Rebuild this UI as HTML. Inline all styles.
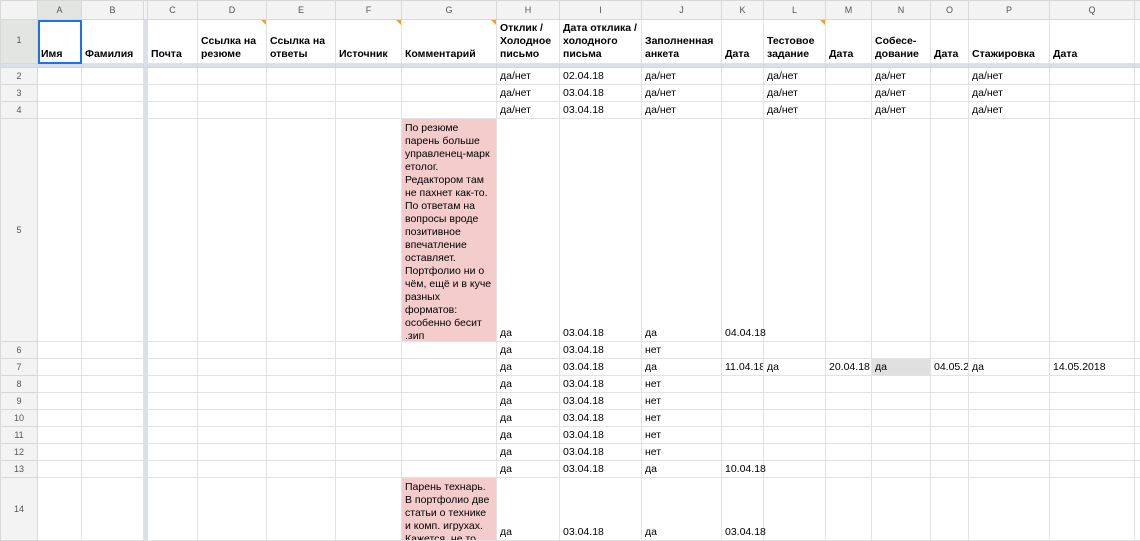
<!DOCTYPE html>
<html><head><meta charset="utf-8"><style>
*{box-sizing:border-box}
body{margin:0;width:1140px;height:539px;overflow:hidden;background:#fff;font-family:"Liberation Sans",Arial,sans-serif}
table{border-collapse:collapse;table-layout:fixed;width:1140px}
td{border:1px solid #e2e2e2;padding:0 3px 1px 3px;font-size:10.5px;color:#000;white-space:nowrap;overflow:hidden;vertical-align:bottom;line-height:13px;position:relative}
tr.ch td{background:#f3f3f3;color:#555;font-size:9px;text-align:center;vertical-align:middle;border-color:#d8d8d8;padding:0}
td.rh{background:#f3f3f3;color:#555;font-size:9px;text-align:center;vertical-align:middle;border-color:#d8d8d8;padding:0}
td.fz{background:#dcdfe6;border-color:#dcdfe6;padding:0}
tr.sep td{background:#dcdfe6;border-color:#d4d7de;padding:0;height:4px}
tr.h1 td{font-weight:bold;padding-bottom:2px}
td.pk{background:#f4cccc;vertical-align:top;padding:0}
td.pk div{padding:3px 3px 0 3px;overflow:hidden}
.tri{position:absolute;top:0;right:0;width:0;height:0;border-top:5px solid #f0a030;border-left:5px solid transparent}
.sel{outline:2px solid #1a73e8;outline-offset:-2px}
.gr{background:#e0e0e0}
</style></head><body>
<table>
<colgroup><col style="width:37px"><col style="width:44px"><col style="width:62px"><col style="width:4px"><col style="width:50px"><col style="width:69px"><col style="width:69px"><col style="width:66px"><col style="width:95px"><col style="width:63px"><col style="width:82px"><col style="width:80px"><col style="width:42px"><col style="width:62px"><col style="width:46px"><col style="width:59px"><col style="width:38px"><col style="width:81px"><col style="width:85px"><col style="width:6px"></colgroup>
<tr class="ch" style="height:19px"><td></td><td style="background:#e3e5e3">A</td><td>B</td><td class="fz"></td><td>C</td><td>D</td><td>E</td><td>F</td><td>G</td><td>H</td><td>I</td><td>J</td><td>K</td><td>L</td><td>M</td><td>N</td><td>O</td><td>P</td><td>Q</td><td></td></tr>
<tr class="h1" style="height:44px"><td class="rh" style="background:#e3e5e3;font-weight:normal">1</td><td class="sel">Имя</td><td>Фамилия</td><td class="fz"></td><td>Почта</td><td>Ссылка на<br>резюме<span class="tri"></span></td><td>Ссылка на<br>ответы</td><td>Источник<span class="tri"></span></td><td>Комментарий<span class="tri"></span></td><td>Отклик /<br>Холодное<br>письмо</td><td>Дата отклика /<br>холодного<br>письма</td><td>Заполненная<br>анкета</td><td>Дата</td><td>Тестовое<br>задание<span class="tri"></span></td><td>Дата</td><td>Собесе-<br>дование</td><td>Дата</td><td>Стажировка</td><td>Дата</td><td></td></tr>
<tr class="sep"><td></td><td></td><td></td><td></td><td></td><td></td><td></td><td></td><td></td><td></td><td></td><td></td><td></td><td></td><td></td><td></td><td></td><td></td><td></td><td></td></tr>
<tr style="height:17px"><td class="rh">2</td><td></td><td></td><td class="fz"></td><td></td><td></td><td></td><td></td><td></td><td>да/нет</td><td>02.04.18</td><td>да/нет</td><td></td><td>да/нет</td><td></td><td>да/нет</td><td></td><td>да/нет</td><td></td><td></td></tr>
<tr style="height:17px"><td class="rh">3</td><td></td><td></td><td class="fz"></td><td></td><td></td><td></td><td></td><td></td><td>да/нет</td><td>03.04.18</td><td>да/нет</td><td></td><td>да/нет</td><td></td><td>да/нет</td><td></td><td>да/нет</td><td></td><td></td></tr>
<tr style="height:17px"><td class="rh">4</td><td></td><td></td><td class="fz"></td><td></td><td></td><td></td><td></td><td></td><td>да/нет</td><td>03.04.18</td><td>да/нет</td><td></td><td>да/нет</td><td></td><td>да/нет</td><td></td><td>да/нет</td><td></td><td></td></tr>
<tr style="height:223px"><td class="rh">5</td><td></td><td></td><td class="fz"></td><td></td><td></td><td></td><td></td><td class="pk"><div style="height:222px">По резюме<br>парень больше<br>управленец-марк<br>етолог.<br>Редактором там<br>не пахнет как-то.<br>По ответам на<br>вопросы вроде<br>позитивное<br>впечатление<br>оставляет.<br>Портфолио ни о<br>чём, ещё и в куче<br>разных<br>форматов:<br>особенно бесит<br>.зип</div></td><td>да</td><td>03.04.18</td><td>да</td><td style="overflow:visible">04.04.18</td><td></td><td></td><td></td><td></td><td></td><td></td><td></td></tr>
<tr style="height:17px"><td class="rh">6</td><td></td><td></td><td class="fz"></td><td></td><td></td><td></td><td></td><td></td><td>да</td><td>03.04.18</td><td>нет</td><td></td><td></td><td></td><td></td><td></td><td></td><td></td><td></td></tr>
<tr style="height:17px"><td class="rh">7</td><td></td><td></td><td class="fz"></td><td></td><td></td><td></td><td></td><td></td><td>да</td><td>03.04.18</td><td>да</td><td>11.04.18</td><td>да</td><td>20.04.18</td><td class="gr">да</td><td>04.05.2018</td><td>да</td><td>14.05.2018</td><td></td></tr>
<tr style="height:17px"><td class="rh">8</td><td></td><td></td><td class="fz"></td><td></td><td></td><td></td><td></td><td></td><td>да</td><td>03.04.18</td><td>нет</td><td></td><td></td><td></td><td></td><td></td><td></td><td></td><td></td></tr>
<tr style="height:17px"><td class="rh">9</td><td></td><td></td><td class="fz"></td><td></td><td></td><td></td><td></td><td></td><td>да</td><td>03.04.18</td><td>нет</td><td></td><td></td><td></td><td></td><td></td><td></td><td></td><td></td></tr>
<tr style="height:17px"><td class="rh">10</td><td></td><td></td><td class="fz"></td><td></td><td></td><td></td><td></td><td></td><td>да</td><td>03.04.18</td><td>нет</td><td></td><td></td><td></td><td></td><td></td><td></td><td></td><td></td></tr>
<tr style="height:17px"><td class="rh">11</td><td></td><td></td><td class="fz"></td><td></td><td></td><td></td><td></td><td></td><td>да</td><td>03.04.18</td><td>нет</td><td></td><td></td><td></td><td></td><td></td><td></td><td></td><td></td></tr>
<tr style="height:17px"><td class="rh">12</td><td></td><td></td><td class="fz"></td><td></td><td></td><td></td><td></td><td></td><td>да</td><td>03.04.18</td><td>нет</td><td></td><td></td><td></td><td></td><td></td><td></td><td></td><td></td></tr>
<tr style="height:17px"><td class="rh">13</td><td></td><td></td><td class="fz"></td><td></td><td></td><td></td><td></td><td></td><td>да</td><td>03.04.18</td><td>да</td><td style="overflow:visible">10.04.18</td><td></td><td></td><td></td><td></td><td></td><td></td><td></td></tr>
<tr style="height:63px"><td class="rh">14</td><td></td><td></td><td class="fz"></td><td></td><td></td><td></td><td></td><td class="pk"><div style="height:62px">Парень технарь.<br>В портфолио две<br>статьи о технике<br>и комп. игрухах.<br>Кажется, не то</div></td><td>да</td><td>03.04.18</td><td>да</td><td style="overflow:visible">03.04.18</td><td></td><td></td><td></td><td></td><td></td><td></td><td></td></tr>
</table>
</body></html>
